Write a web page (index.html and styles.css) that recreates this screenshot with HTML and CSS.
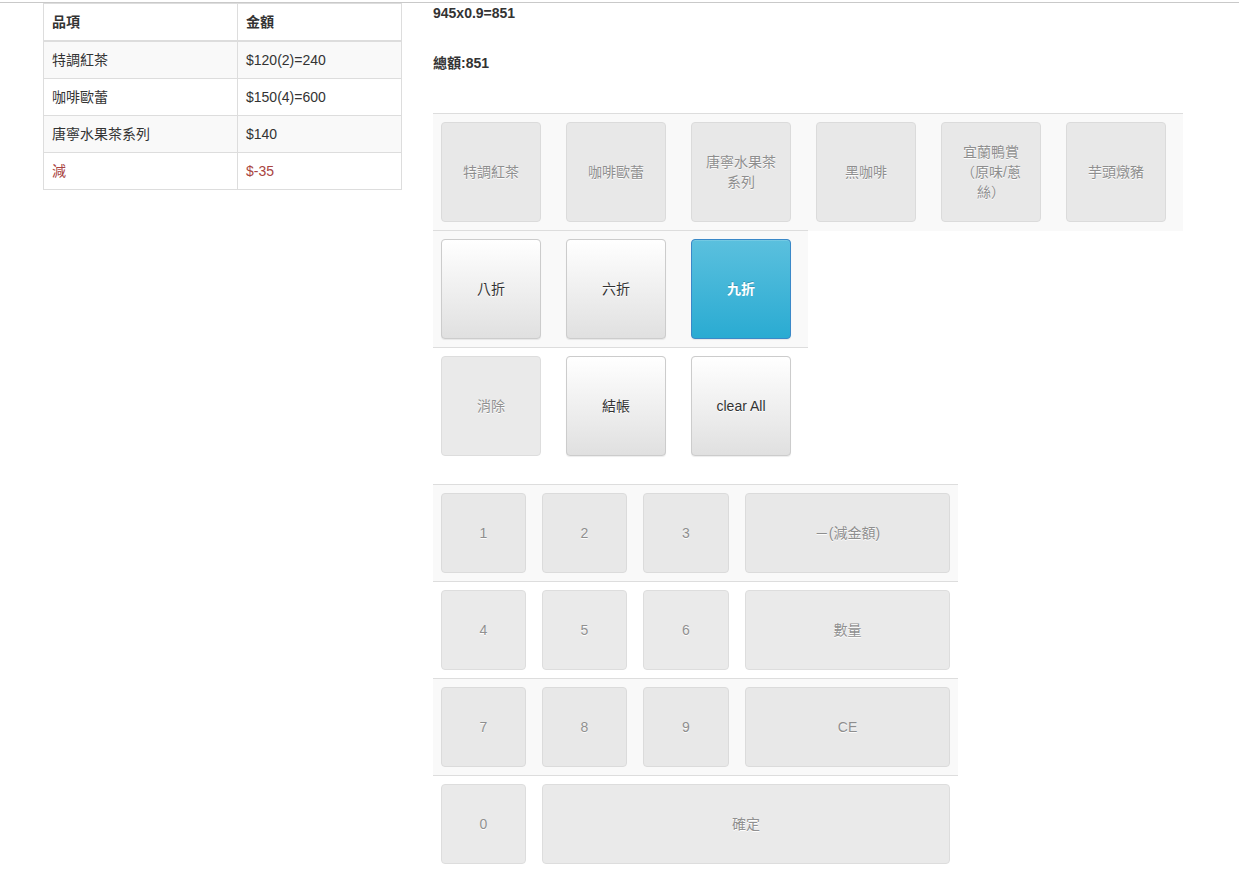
FILE: index.html
```html
<!DOCTYPE html>
<html lang="zh-Hant">
<head>
<meta charset="utf-8">
<title>POS</title>
<link rel="stylesheet" href="styles.css">
</head>
<body>
<div class="topline"></div>
<div class="page">
  <div class="left">
    <table class="order">
      <thead>
        <tr><th class="c1">品項</th><th class="c2">金額</th></tr>
      </thead>
      <tbody>
        <tr class="odd"><td>特調紅茶</td><td>$120(2)=240</td></tr>
        <tr><td>咖啡歐蕾</td><td>$150(4)=600</td></tr>
        <tr class="odd"><td>唐寧水果茶系列</td><td>$140</td></tr>
        <tr class="danger"><td>減</td><td>$-35</td></tr>
      </tbody>
    </table>
  </div>
  <div class="right">
    <div class="calc">945x0.9=851</div>
    <div class="total">總額:851</div>
    <table class="pad">
      <tr class="odd">
        <td><button class="btn disabled">特調紅茶</button></td>
        <td><button class="btn disabled">咖啡歐蕾</button></td>
        <td><button class="btn disabled">唐寧水果茶系列</button></td>
        <td><button class="btn disabled">黑咖啡</button></td>
        <td><button class="btn disabled">宜蘭鴨賞（原味/蔥絲）</button></td>
        <td><button class="btn disabled">芋頭燉豬</button></td>
      </tr>
      <tr class="odd">
        <td><button class="btn">八折</button></td>
        <td><button class="btn">六折</button></td>
        <td><button class="btn info">九折</button></td>
      </tr>
      <tr>
        <td><button class="btn disabled">消除</button></td>
        <td><button class="btn">結帳</button></td>
        <td><button class="btn">clear All</button></td>
      </tr>
    </table>
    <table class="num">
      <tr class="odd">
        <td><button class="key disabled w85">1</button></td>
        <td><button class="key disabled w85">2</button></td>
        <td><button class="key disabled w86">3</button></td>
        <td><button class="key disabled w205">－(減金額)</button></td>
      </tr>
      <tr>
        <td><button class="key disabled w85">4</button></td>
        <td><button class="key disabled w85">5</button></td>
        <td><button class="key disabled w86">6</button></td>
        <td><button class="key disabled w205">數量</button></td>
      </tr>
      <tr class="odd">
        <td><button class="key disabled w85">7</button></td>
        <td><button class="key disabled w85">8</button></td>
        <td><button class="key disabled w86">9</button></td>
        <td><button class="key disabled w205">CE</button></td>
      </tr>
      <tr>
        <td><button class="key disabled w85">0</button></td>
        <td colspan="3"><button class="key disabled wide">確定</button></td>
      </tr>
    </table>
  </div>
</div>
</body>
</html>
```
FILE: styles.css
```css
html, body {
  margin: 0;
  padding: 0;
  background: #fff;
}
body {
  font-family: "Liberation Sans", Arial, "Noto Sans CJK TC", sans-serif;
  font-size: 14px;
  line-height: 20px;
  color: #333;
}
.topline {
  box-sizing: border-box;
  height: 3px;
  border-bottom: 1px solid #c9c9c9;
}
.page {
  display: flex;
  align-items: flex-start;
  padding-left: 43px;
  gap: 31px;
}
.left {
  width: 359px;
  flex: none;
}
.order {
  width: 359px;
  border-collapse: collapse;
  border: 1px solid #ddd;
}
.order th,
.order td {
  padding: 8px;
  text-align: left;
  border: 1px solid #ddd;
  vertical-align: top;
  line-height: 20px;
}
.order th {
  font-weight: bold;
  border-bottom: 2px solid #ddd;
}
.order .c1 { width: 177px; }
.order tr.odd td { background: #f9f9f9; }
.order tr.danger td { color: #a94442; }

.right {
  flex: none;
}
.calc {
  font-weight: bold;
  line-height: 20px;
}
.total {
  font-weight: bold;
  line-height: 20px;
  margin-top: 30px;
  margin-bottom: 40px;
}
.pad, .num {
  border-collapse: collapse;
}
.pad td, .num td {
  padding: 8px;
  border-top: 1px solid #ddd;
  vertical-align: top;
}
.pad td {
  width: 109px;
}
.pad tr.odd td, .num tr.odd td {
  background: #f9f9f9;
}
.num {
  margin-top: 20px;
}
.btn, .key {
  display: block;
  box-sizing: border-box;
  font-family: "Liberation Sans", Arial, "Noto Sans CJK TC", sans-serif;
  font-size: 14px;
  line-height: 20px;
  color: #333;
  border: 1px solid #ccc;
  border-radius: 4px;
  padding: 6px 12px;
  margin: 0;
  text-align: center;
  background-color: #e0e0e0;
  background-image: linear-gradient(to bottom, #fff 0%, #e0e0e0 100%);
  text-shadow: 0 1px 0 #fff;
  box-shadow: inset 0 1px 0 rgba(255,255,255,.15), 0 1px 1px rgba(0,0,0,.075);
  white-space: normal;
}
.btn {
  width: 100px;
  height: 100px;
}
.key {
  height: 80px;
}
.w85 { width: 85px; }
.w86 { width: 86px; }
.w205 { width: 205px; }
.wide { width: 408px; }
.disabled {
  background-image: none;
  background-color: #e0e0e0;
  color: #555;
  opacity: .65;
  box-shadow: none;
}
.info {
  color: #fff;
  font-weight: bold;
  background-image: linear-gradient(to bottom, #5bc0de 0%, #2aabd2 100%);
  border-color: #3a88c8;
  text-shadow: 0 -1px 0 rgba(0,0,0,.2);
}
```
